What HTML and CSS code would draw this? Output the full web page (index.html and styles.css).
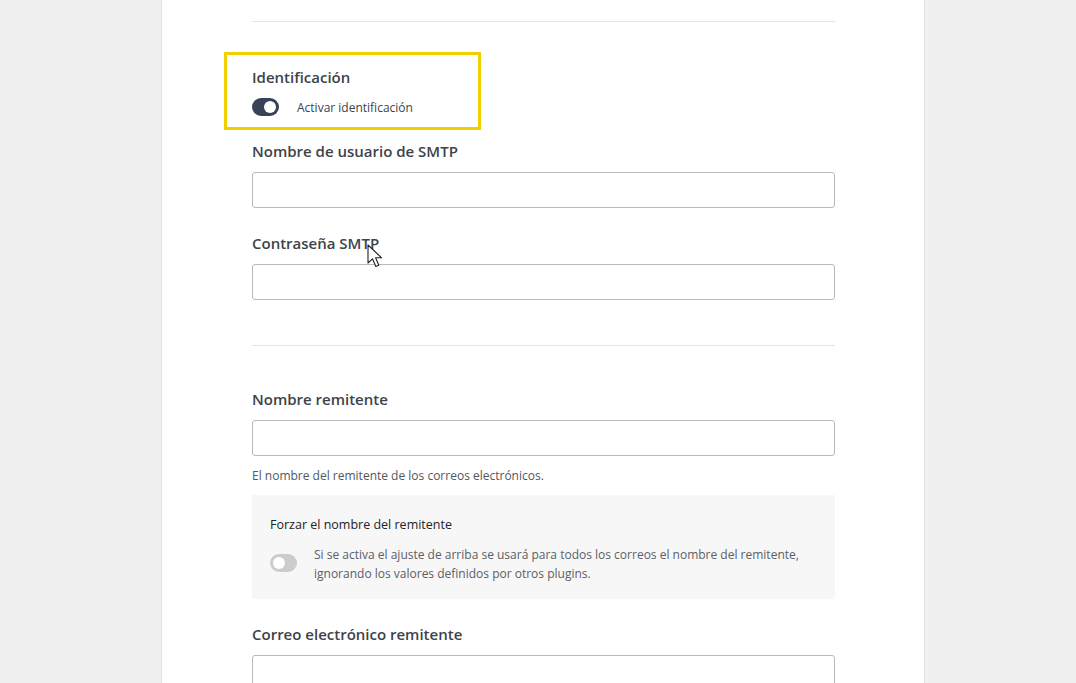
FILE: index.html
```html
<!DOCTYPE html>
<html lang="es">
<head>
	<meta charset="UTF-8">
	<title>Ajustes SMTP</title>
	<link rel="stylesheet" href="styles.css">
</head>
<body>
	<div class="panel">
		<hr class="divider">

		<div class="highlight">
			<h3 class="field-title">Identificación</h3>
			<label class="switch-row">
				<span class="switch on"><span class="knob"></span></span>
				<span class="switch-text">Activar identificación</span>
			</label>
		</div>

		<div class="field first">
			<label class="field-title" for="smtp-user">Nombre de usuario de SMTP</label>
			<input type="text" id="smtp-user">
		</div>

		<div class="field">
			<label class="field-title" for="smtp-pass">Contraseña SMTP</label>
			<input type="password" id="smtp-pass">
		</div>

		<hr class="divider mid">

		<div class="field">
			<label class="field-title" for="from-name">Nombre remitente</label>
			<input type="text" id="from-name">
			<p class="help">El nombre del remitente de los correos electrónicos.</p>
		</div>

		<div class="option-box">
			<h4>Forzar el nombre del remitente</h4>
			<label class="switch-row top">
				<span class="switch"><span class="knob"></span></span>
				<span class="option-text">Si se activa el ajuste de arriba se usará para todos los correos el nombre del remitente, ignorando los valores definidos por otros plugins.</span>
			</label>
		</div>

		<div class="field">
			<label class="field-title" for="from-mail">Correo electrónico remitente</label>
			<input type="text" id="from-mail">
		</div>
	</div>

	<!-- mouse pointer -->
	<svg class="cursor" width="18" height="26" viewBox="0 0 18 26">
		<path d="M1 1 L1 19 L5.5 14.8 L8.8 22.5 L11.8 21.2 L8.6 13.8 L14.6 13.8 Z" fill="#fff" stroke="#222" stroke-width="1.1" stroke-linejoin="round"/>
	</svg>
</body>
</html>
```

FILE: styles.css
```css
* {
	margin: 0;
	padding: 0;
	box-sizing: border-box;
}

body {
	background-color: #f0f0f0;
	font-family: "Open Sans", "Noto Sans", sans-serif;
	color: #3c434a;
	height: 683px;
	overflow: hidden;
}

.panel {
	width: 764px;
	min-height: 683px;
	margin-left: 161px;
	padding: 21px 90px 0 90px;
	background-color: #ffffff;
	border-left: 1px solid #e2e2e2;
	border-right: 1px solid #e2e2e2;
}

.divider {
	border: none;
	border-top: 1px solid #e5e5e5;
	width: 583px;
}

.divider.mid {
	margin-top: 45px;
	margin-bottom: 43px;
}

/* highlighted block */
.highlight {
	width: 257px;
	height: 78px;
	margin: 30px 0 0 -28px;
	padding: 12px 0 0 25px;
	border: 3px solid #f0d000;
}

.field-title {
	display: block;
	font-size: 15px;
	font-weight: 600;
	color: #3c434a;
	line-height: 20px;
}

.switch-row {
	display: flex;
	align-items: center;
	margin-top: 11px;
}

.switch-row.top {
	align-items: flex-start;
	margin-top: 18px;
}

.switch {
	position: relative;
	display: inline-block;
	width: 27px;
	height: 18px;
	border-radius: 9px;
	background-color: #cccccc;
	flex-shrink: 0;
}

.switch .knob {
	position: absolute;
	top: 3px;
	left: 3px;
	width: 12px;
	height: 12px;
	border-radius: 50%;
	background-color: #ffffff;
}

.switch.on {
	background-color: #3a4258;
}

.switch.on .knob {
	left: auto;
	right: 3px;
}

.switch-text {
	margin-left: 18px;
	font-size: 12px;
	color: #3c434a;
}

.field {
	margin-top: 11px;
}

.field + .field {
	margin-top: 25px;
}

.field input {
	display: block;
	width: 583px;
	height: 36px;
	margin-top: 11px;
	border: 1px solid #b4b9be;
	border-radius: 3px;
	background-color: #ffffff;
	outline: none;
	font-size: 14px;
}

.help {
	margin-top: 11px;
	font-size: 12px;
	color: #50575e;
	line-height: 17px;
}

/* grey option box */
.option-box {
	width: 583px;
	height: 104px;
	margin-top: 11px;
	padding: 21px 18px 0 18px;
	background-color: #f7f7f7;
}

.option-box h4 {
	font-size: 12.5px;
	font-weight: 400;
	color: #1d2327;
	line-height: 17px;
}

.option-text {
	margin-left: 17px;
	margin-top: -6px;
	font-size: 12px;
	color: #5a6066;
	line-height: 19px;
}

.option-box .switch {
	margin-top: 3px;
}

.option-box + .field {
	margin-top: 25px;
}

.cursor {
	position: absolute;
	left: 367px;
	top: 244px;
}
```
